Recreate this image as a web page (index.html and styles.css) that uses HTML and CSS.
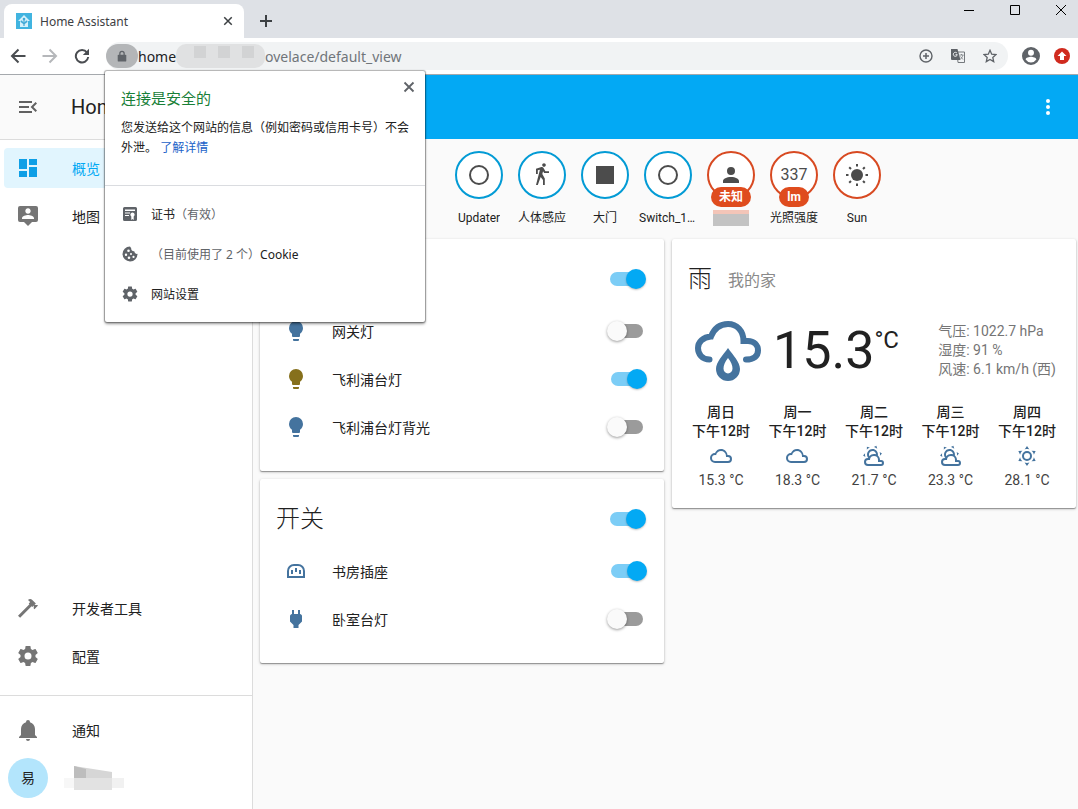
FILE: index.html
```html
<!DOCTYPE html>
<html lang="zh-CN">

<head>
  <meta charset="UTF-8">
  <meta name="viewport" content="width=device-width, initial-scale=1.0">
  <title>Home Assistant</title>
  <link rel="stylesheet" href="styles.css">
</head>

<body>
  <!-- shared icons -->
  <svg class="sprite" aria-hidden="true">
    <symbol id="i-close" viewBox="0 0 12 12"><path d="M1.500 1.500l9 9M10.500 1.500l-9 9" fill="none" stroke="currentColor" stroke-width="1.800"/></symbol>
    <symbol id="i-cog" viewBox="0 0 24 24"><path d="M12,15.5A3.5,3.5 0 0,1 8.5,12A3.5,3.5 0 0,1 12,8.500A3.5,3.5 0 0,1 15.5,12A3.5,3.5 0 0,1 12,15.5M19.43,12.97C19.47,12.65 19.5,12.33 19.5,12C19.5,11.67 19.47,11.34 19.43,11L21.54,9.37C21.73,9.22 21.78,8.95 21.66,8.73L19.66,5.27C19.54,5.05 19.27,4.96 19.05,5.05L16.56,6.05C16.04,5.66 15.5,5.32 14.87,5.07L14.5,2.42C14.46,2.18 14.25,2 14,2H10C9.75,2 9.54,2.18 9.5,2.42L9.13,5.07C8.5,5.32 7.96,5.66 7.44,6.05L4.95,5.05C4.73,4.96 4.46,5.05 4.34,5.27L2.34,8.73C2.21,8.95 2.27,9.22 2.46,9.37L4.57,11C4.53,11.34 4.5,11.67 4.5,12C4.5,12.33 4.53,12.65 4.57,12.97L2.46,14.63C2.27,14.78 2.21,15.05 2.34,15.27L4.34,18.73C4.46,18.95 4.73,19.03 4.95,18.95L7.44,17.94C7.96,18.34 8.5,18.68 9.13,18.93L9.5,21.58C9.54,21.82 9.75,22 10,22H14C14.25,22 14.46,21.82 14.5,21.58L14.87,18.93C15.5,18.67 16.04,18.34 16.56,17.94L19.05,18.95C19.27,19.03 19.54,18.95 19.66,18.73L21.66,15.27C21.78,15.05 21.73,14.78 21.54,14.63L19.43,12.97Z"/></symbol>
    <symbol id="i-bulb" viewBox="0 0 24 24"><path d="M12,2A7,7 0 0,0 5,9C5,11.38 6.19,13.47 8,14.74V17A1,1 0 0,0 9,18H15A1,1 0 0,0 16,17V14.74C17.81,13.47 19,11.38 19,9A7,7 0 0,0 12,2M9,21A1,1 0 0,0 10,22H14A1,1 0 0,0 15,21V20H9V21Z"/></symbol>
    <symbol id="i-ring" viewBox="0 0 24 24"><circle cx="12" cy="12" r="9" fill="none" stroke="currentColor" stroke-width="2"/></symbol>
    <symbol id="i-cloudy" viewBox="0 0 24 24"><path d="M6,19A5,5 0 0,1 1,14A5,5 0 0,1 6,9C7,6.65 9.3,5 12,5C15.43,5 18.24,7.66 18.5,11.03L19,11A4,4 0 0,1 23,15A4,4 0 0,1 19,19H6M19,13H17V12A5,5 0 0,0 12,7C9.5,7 7.45,8.82 7.06,11.19C6.73,11.07 6.37,11 6,11A3,3 0 0,0 3,14A3,3 0 0,0 6,17H19A2,2 0 0,0 21,15A2,2 0 0,0 19,13Z"/></symbol>
    <symbol id="i-partly" viewBox="0 0 24 24"><path d="M12.74,5.47C15.1,6.5 16.35,9.03 15.92,11.46C17.19,12.56 18,14.19 18,16V16.17C18.31,16.06 18.65,16 19,16A3,3 0 0,1 22,19A3,3 0 0,1 19,22H6A4,4 0 0,1 2,18A4,4 0 0,1 6,14H6.27C5,12.45 4.6,10.24 5.5,8.26C6.72,5.5 9.97,4.24 12.74,5.47M11.93,7.3C10.16,6.5 8.09,7.31 7.31,9.07C6.85,10.09 6.93,11.22 7.41,12.13C8.5,10.83 10.16,10 12,10C12.7,10 13.38,10.12 14,10.34C13.94,9.06 13.18,7.86 11.93,7.3M13.55,3.64C13,3.4 12.45,3.23 11.88,3.12L14.37,1.82L15.27,4.71C14.76,4.29 14.19,3.93 13.55,3.64M6.09,4.44C5.6,4.79 5.17,5.19 4.8,5.63L4.91,2.82L7.87,3.5C7.25,3.71 6.65,4.03 6.09,4.44M18,9.71C17.91,9.12 17.78,8.55 17.59,8L19.97,9.5L17.92,11.73C18.03,11.08 18.05,10.4 18,9.71M3.04,11.3C3.11,11.9 3.24,12.47 3.43,13L1.06,11.5L3.1,9.28C3,9.93 2.97,10.61 3.04,11.3M19,18H16V16A4,4 0 0,0 12,12A4,4 0 0,0 8,16H6A2,2 0 0,0 4,18A2,2 0 0,0 6,20H19A1,1 0 0,0 20,19A1,1 0 0,0 19,18Z"/></symbol>
    <symbol id="i-sunny" viewBox="0 0 24 24"><path d="M12,7A5,5 0 0,1 17,12A5,5 0 0,1 12,17A5,5 0 0,1 7,12A5,5 0 0,1 12,7M12,9A3,3 0 0,0 9,12A3,3 0 0,0 12,15A3,3 0 0,0 15,12A3,3 0 0,0 12,9M12,2L14.39,5.42C13.65,5.15 12.84,5 12,5C11.16,5 10.35,5.15 9.61,5.42L12,2M3.34,7L7.5,6.65C6.9,7.16 6.36,7.78 5.94,8.5C5.5,9.24 5.25,10 5.11,10.79L3.34,7M3.36,17L5.12,13.23C5.26,14 5.53,14.78 5.95,15.5C6.37,16.24 6.91,16.86 7.5,17.37L3.36,17M20.65,7L18.88,10.79C18.74,10 18.47,9.23 18.05,8.5C17.63,7.78 17.1,7.15 16.5,6.64L20.65,7M20.64,17L16.5,17.36C17.09,16.85 17.62,16.22 18.04,15.5C18.46,14.77 18.73,14 18.87,13.21L20.64,17M12,22L9.59,18.56C10.33,18.83 11.14,19 12,19C12.82,19 13.63,18.83 14.37,18.56L12,22Z"/></symbol>
  </svg>

  <header class="browser">
    <div class="tabs">
      <div class="tab">
        <svg class="favicon" viewBox="0 0 16 16"><rect width="16" height="16" fill="#41b4e0"/><path d="M8 2L2 8h2v6h8V8h2z" fill="#d5f1fb"/><path d="M8 13V6M8 11L5.500 8.500M8 11l2.500-2.500" fill="none" stroke="#41a9d6" stroke-width="1.200"/><circle cx="8" cy="6" r="1.300" fill="#41a9d6"/><circle cx="5.500" cy="8.500" r="1" fill="#41a9d6"/><circle cx="10.500" cy="8.500" r="1" fill="#41a9d6"/></svg>
        <span class="tab-title">Home Assistant</span>
        <button class="plain" aria-label="关闭标签页"><svg class="s10"><use href="#i-close"/></svg></button>
      </div>
      <button class="plain new-tab" aria-label="新标签页"><svg class="s12" viewBox="0 0 12 12"><path d="M6 0v12M0 6h12" stroke="#3c4043" stroke-width="2"/></svg></button>
      <div class="window-buttons">
        <button class="plain" aria-label="最小化"><svg class="s12" viewBox="0 0 12 12"><path d="M1 6.500h10" stroke="#000"/></svg></button>
        <button class="plain" aria-label="最大化"><svg class="s12" viewBox="0 0 12 12"><path d="M1.500 1.500h9v9h-9z" fill="none" stroke="#000"/></svg></button>
        <button class="plain" aria-label="关闭"><svg class="s12" viewBox="0 0 12 12"><path d="M1 1l10 10M11 1L1 11" stroke="#000"/></svg></button>
      </div>
    </div>

    <div class="toolbar">
      <div class="nav">
        <button class="plain" aria-label="后退"><svg class="s16" viewBox="0 0 16 16"><path d="M15.500 8H2M8.500 1.500L2 8l6.500 6.500" fill="none" stroke="#4a4d51" stroke-width="2"/></svg></button>
        <button class="plain" aria-label="前进"><svg class="s16" viewBox="0 0 16 16"><path d="M.5 8H14M7.500 1.500L14 8l-6.500 6.500" fill="none" stroke="#b5b7ba" stroke-width="2"/></svg></button>
        <button class="plain" aria-label="重新加载"><svg class="s16" viewBox="0 0 16 16"><path d="M13 4.500A6.200 6.200 0 1 0 14.200 9" fill="none" stroke="#4a4d51" stroke-width="2"/><path d="M15 .8V7H8.800z" fill="#4a4d51"/></svg></button>
      </div>
      <div class="omnibox">
        <button class="plain lock" aria-label="查看网站信息"><svg class="s12" viewBox="0 0 12 14"><path d="M3.500 6V4a2.500 2.500 0 0 1 5 0v2" fill="none" stroke="#5f6368" stroke-width="1.500"/><rect x="1" y="5.500" width="10" height="8" rx="1" fill="#5f6368"/></svg></button>
        <input class="url host" type="text" value="home" aria-label="主机">
        <span class="mosaic url-mosaic"><i></i><i></i><i></i></span>
        <input class="url path" type="text" value="ovelace/default_view" aria-label="路径">
        <button class="plain" aria-label="缩放"><svg class="s14" viewBox="0 0 14 14"><circle cx="7" cy="7" r="6" fill="none" stroke="#5f6368" stroke-width="1.400"/><path d="M7 4v6M4 7h6" stroke="#5f6368" stroke-width="1.500"/></svg></button>
        <button class="plain" aria-label="翻译"><svg class="s14" viewBox="0 0 14 14"><path d="M6 3h7.500v10.500H7z" fill="none" stroke="#75797d"/><path d="M0 0h6.500l3 11H1a1 1 0 0 1-1-1z" fill="#5f6368"/><path d="M6 4.200A2 2 0 1 0 6.300 5.700H4.500" fill="none" stroke="#f1f3f4"/><path d="M8.500 6h4M10.500 5v1M12 6c-.5 2-1.500 3-2.500 4M9.500 7.500l2.500 3" fill="none" stroke="#75797d" stroke-width=".8"/></svg></button>
        <button class="plain" aria-label="收藏"><svg class="s14" viewBox="0 0 14 14"><path d="M7 1.300l1.700 3.900 4.300.4-3.200 2.800.9 4.200L7 10.400l-3.700 2.200.9-4.200L1 5.600l4.300-.4z" fill="none" stroke="#5f6368" stroke-width="1.300"/></svg></button>
      </div>
      <button class="plain" aria-label="用户"><svg class="s18" viewBox="0 0 20 20"><path fill="#5f6368" d="M10 0a10 10 0 1 0 0 20 10 10 0 0 0 0-20m0 3a3.300 3.300 0 1 1 0 6.600A3.300 3.300 0 0 1 10 3m0 14.200a7.200 7.200 0 0 1-6-3.200c0-2 4-3.100 6-3.100s6 1.100 6 3.100a7.200 7.200 0 0 1-6 3.200"/></svg></button>
      <button class="plain" aria-label="更新"><svg class="s16" viewBox="0 0 16 16"><circle cx="8" cy="8" r="8" fill="#d02a1e"/><path d="M8 3.500L3.500 8H6v4h4V8h2.500z" fill="#fff"/></svg></button>
    </div>

    <section class="site-info">
      <button class="plain site-close" aria-label="关闭"><svg class="s12"><use href="#i-close"/></svg></button>
      <div class="site-summary">
        <h2>连接是安全的</h2>
        <p>您发送给这个网站的信息（例如密码或信用卡号）不会外泄。 <a href="#">了解详情</a></p>
      </div>
      <div class="site-row">
        <svg class="s16" viewBox="0 0 16 16"><path fill-rule="evenodd" d="M2.500 1h11A1.500 1.500 0 0 1 15 2.500v11a1.500 1.500 0 0 1-1.500 1.500h-11A1.500 1.500 0 0 1 1 13.500v-11A1.500 1.500 0 0 1 2.500 1M3 3.500V5h10V3.500zM3 6.500v1h5v-1zM3 9v1h4V9zM10.500 6.500a2.200 2.200 0 0 0-1.200 4V14l1.200-1 1.200 1v-3.500a2.200 2.200 0 0 0-1.200-4"/></svg>
        <span>证书<em>（有效）</em></span>
      </div>
      <div class="site-row">
        <svg class="s16" viewBox="0 0 16 16"><path fill-rule="evenodd" d="M8 .5a7.500 7.500 0 1 0 7.500 7.300 2.600 2.600 0 0 1-3.200-2.600A2.700 2.700 0 0 1 9.200 2 2.500 2.500 0 0 1 8 .5M6.500 3.500a1.300 1.300 0 1 1 0 2.600 1.300 1.300 0 0 1 0-2.600M4 7.500a1.200 1.200 0 1 1 0 2.400 1.200 1.200 0 0 1 0-2.400M9 7a1 1 0 1 1 0 2 1 1 0 0 1 0-2M7 10.500a1.300 1.300 0 1 1 0 2.600 1.300 1.300 0 0 1 0-2.600M11.500 9.800a1.100 1.100 0 1 1 0 2.200 1.100 1.100 0 0 1 0-2.200"/></svg>
        <span><em>（目前使用了 2 个）</em>Cookie</span>
      </div>
      <div class="site-row">
        <svg class="s18"><use href="#i-cog"/></svg>
        <span>网站设置</span>
      </div>
    </section>
  </header>

  <div class="app">
    <aside class="sidebar">
      <div class="sidebar-head">
        <button class="plain" aria-label="收起菜单"><svg class="s24" viewBox="0 0 24 24"><path d="M21,15.61L19.59,17L14.58,12L19.59,7L21,8.39L17.44,12L21,15.61M3,6H16V8H3V6M3,13V11H13V13H3M3,18V16H16V18H3Z"/></svg></button>
        <span>Home Assistant</span>
      </div>
      <nav class="menu">
        <a class="item active" href="#"><svg class="s24" viewBox="0 0 24 24"><path d="M13,3V9H21V3M13,21H21V11H13M3,21H11V15H3M3,13H11V3H3V13Z"/></svg>概览</a>
        <a class="item" href="#"><svg class="s24" viewBox="0 0 24 24"><path d="M20,2H4A2,2 0 0,0 2,4V16A2,2 0 0,0 4,18H8L12,22L16,18H20A2,2 0 0,0 22,16V4A2,2 0 0,0 20,2M12,4.3C13.5,4.3 14.7,5.5 14.7,7C14.7,8.5 13.5,9.7 12,9.7C10.5,9.7 9.3,8.5 9.3,7C9.3,5.5 10.5,4.3 12,4.3M18,15H6V14.1C6,12.1 10,11 12,11C14,11 18,12.1 18,14.1V15Z"/></svg>地图</a>
        <a class="item tools" href="#"><svg class="s24" viewBox="0 0 24 24"><path d="M2,19.63L13.43,8.2L12.72,7.5L14.14,6.07L12,3.89C13.2,2.7 15.09,2.7 16.27,3.89L19.87,7.5L18.45,8.91H21.29L22,9.62L18.45,13.21L17.74,12.5V9.62L16.27,11.04L15.56,10.33L4.13,21.76L2,19.63Z"/></svg>开发者工具</a>
        <a class="item" href="#"><svg class="s24"><use href="#i-cog"/></svg>配置</a>
      </nav>
      <div class="menu user-menu">
        <a class="item" href="#"><svg class="s24" viewBox="0 0 24 24"><path d="M21,19V20H3V19L5,17V11C5,7.9 7.03,5.17 10,4.29C10,4.19 10,4.1 10,4A2,2 0 0,1 12,2A2,2 0 0,1 14,4C14,4.1 14,4.19 14,4.29C16.97,5.17 19,7.9 19,11V17L21,19M14,21A2,2 0 0,1 12,23A2,2 0 0,1 10,21"/></svg>通知</a>
        <a class="item profile" href="#" aria-label="用户"><span class="avatar">易</span>
          <svg class="name-mosaic" viewBox="0 0 60 28"><path d="M0 14h12v10H0z" fill="#f7f7f7"/><path d="M10 2l38 6v6H10z" fill="#d6d6d6"/><path d="M10 2l12 3v9H10z" fill="#bdbdbd"/><path d="M10 14h38v12H10z" fill="#e2e2e2"/><path d="M48 14h12v10H48z" fill="#f1f1f1"/></svg>
        </a>
      </div>
    </aside>

    <main class="main">
      <div class="app-bar">
        <button class="plain" aria-label="更多"><svg class="s24" viewBox="0 0 24 24"><path d="M12,16A2,2 0 1,1 12,20A2,2 0 1,1 12,16M12,10A2,2 0 1,1 12,14A2,2 0 1,1 12,10M12,4A2,2 0 1,1 12,8A2,2 0 1,1 12,4Z"/></svg></button>
      </div>

      <div class="view">
        <div class="badges">
          <div class="badge"><div class="circle"><svg class="s24"><use href="#i-ring"/></svg></div><span>Updater</span></div>
          <div class="badge"><div class="circle"><svg class="s24" viewBox="0 0 24 24"><path d="M14.12,10H19V8.2H15.38L13.38,4.87C13.08,4.37 12.54,4.03 11.92,4.03C11.74,4.03 11.58,4.06 11.42,4.11L6,5.8V11H7.8V7.33L9.91,6.67L6,22H7.8L10.67,13.89L13,17V22H14.8V15.59L12.31,11.05L13.04,8.18M14,3.8C15,3.8 15.8,3 15.8,2C15.8,1 15,0.2 14,0.2C13,0.2 12.2,1 12.2,2C12.2,3 13,3.8 14,3.8Z"/></svg></div><span>人体感应</span></div>
          <div class="badge"><div class="circle"><svg class="s24" viewBox="0 0 24 24"><path d="M3 3h18v18H3z"/></svg></div><span>大门</span></div>
          <div class="badge"><div class="circle"><svg class="s24"><use href="#i-ring"/></svg></div><span>Switch_158d</span></div>
          <div class="badge red"><div class="circle"><svg class="s24" viewBox="0 0 24 24"><path d="M12,4A4,4 0 0,1 16,8A4,4 0 0,1 12,12A4,4 0 0,1 8,8A4,4 0 0,1 12,4M12,14C16.42,14 20,15.79 20,18V20H4V18C4,15.79 7.58,14 12,14Z"/></svg><b>未知</b></div><i class="mosaic badge-mosaic"></i></div>
          <div class="badge red"><div class="circle">337<b>lm</b></div><span>光照强度</span></div>
          <div class="badge red"><div class="circle"><svg class="s24" viewBox="0 0 24 24"><circle cx="12" cy="12" r="6"/><path d="M12 1v2.500M12 20.500V23M1 12h2.500M20.500 12H23M4.200 4.200L6 6M18 18l1.800 1.800M4.200 19.800L6 18M18 6l1.800-1.800" stroke="currentColor" stroke-width="2"/></svg></div><span>Sun</span></div>
        </div>

        <div class="columns">
          <div class="column">
            <section class="card">
              <div class="card-head">
                <h2>灯</h2>
                <input class="toggle" type="checkbox" aria-label="灯" checked>
              </div>
              <div class="entity">
                <svg class="s24"><use href="#i-bulb"/></svg>
                <label for="gateway">网关灯</label>
                <input class="toggle" type="checkbox" id="gateway">
              </div>
              <div class="entity lit">
                <svg class="s24"><use href="#i-bulb"/></svg>
                <label for="philips">飞利浦台灯</label>
                <input class="toggle" type="checkbox" id="philips" checked>
              </div>
              <div class="entity">
                <svg class="s24"><use href="#i-bulb"/></svg>
                <label for="backlight">飞利浦台灯背光</label>
                <input class="toggle" type="checkbox" id="backlight">
              </div>
            </section>

            <section class="card">
              <div class="card-head">
                <h2>开关</h2>
                <input class="toggle" type="checkbox" aria-label="开关" checked>
              </div>
              <div class="entity">
                <svg class="s24" viewBox="0 0 24 24"><path d="M4 18V12a6 6 0 0 1 6-6h4a6 6 0 0 1 6 6v6z" fill="none" stroke="currentColor" stroke-width="2"/><path d="M7 11h2v4H7zM11 9h2v4h-2zM15 11h2v4h-2z"/></svg>
                <label for="study">书房插座</label>
                <input class="toggle" type="checkbox" id="study" checked>
              </div>
              <div class="entity">
                <svg class="s24" viewBox="0 0 24 24"><path d="M16,7V3H14V7H10V3H8V7H8C7,7 6,8 6,9V14.5L9.5,18V21H14.5V18L18,14.5V9C18,8 17,7 16,7Z"/></svg>
                <label for="bedroom">卧室台灯</label>
                <input class="toggle" type="checkbox" id="bedroom">
              </div>
            </section>
          </div>

          <div class="column">
            <section class="card weather">
              <div class="weather-head">
                <h2>雨</h2>
                <span>我的家</span>
              </div>
              <div class="now">
                <svg class="rain" viewBox="0 0 66 60"><path d="M14.500 38.500C7 38.500 3 33 3 27C3 21 8 16 16 15.500C19 8 25 3 33 3C42 3 48.500 10 48.500 20H53C59 20 63 24 63 29.500C63 35 59 38.500 51 38.500" fill="none" stroke="#44739e" stroke-width="6" stroke-linecap="round"/><path fill="#44739e" fill-rule="evenodd" d="M33 27C28 34 21 41 21 48A12 12 0 0 0 45 48C45 41 38 34 33 27ZM33 37C30 41 28.500 44 28.500 47.500A4.500 5 0 0 0 37.500 47.500C37.500 44 36 41 33 37Z"/></svg>
                <div class="temp">15.3<span>°C</span></div>
                <div class="attrs">
                  <div>气压: 1022.7 hPa</div>
                  <div>湿度: 91 %</div>
                  <div>风速: 6.1 km/h (西)</div>
                </div>
              </div>
              <div class="forecast">
                <div class="day"><b>周日<br>下午12时</b><svg class="s24"><use href="#i-cloudy"/></svg>15.3 °C</div>
                <div class="day"><b>周一<br>下午12时</b><svg class="s24"><use href="#i-cloudy"/></svg>18.3 °C</div>
                <div class="day"><b>周二<br>下午12时</b><svg class="s24"><use href="#i-partly"/></svg>21.7 °C</div>
                <div class="day"><b>周三<br>下午12时</b><svg class="s24"><use href="#i-partly"/></svg>23.3 °C</div>
                <div class="day"><b>周四<br>下午12时</b><svg class="s24"><use href="#i-sunny"/></svg>28.1 °C</div>
              </div>
            </section>
          </div>
        </div>
      </div>
    </main>
  </div>
</body>

</html>
```
FILE: styles.css
```css
* {
  box-sizing: border-box;
}

body {
  margin: 0;
  min-height: 100vh;
  display: flex;
  flex-direction: column;
  font-family: Roboto, "Noto Sans CJK SC", sans-serif;
  font-size: 14px;
  color: #212121;
  background: #fafafa;
}

svg {
  display: block;
  flex: none;
  fill: currentColor;
}

h2,
p {
  margin: 0;
  font-weight: 400;
}

em,
i {
  font-style: normal;
}

.sprite {
  position: absolute;
  width: 0;
  height: 0;
}

.s10 { width: 10px; height: 10px; }
.s12 { width: 12px; height: 12px; }
.s14 { width: 14px; height: 14px; }
.s16 { width: 16px; height: 16px; }
.s18 { width: 18px; height: 18px; }
.s24 { width: 24px; height: 24px; }

.plain {
  display: flex;
  align-items: center;
  justify-content: center;
  padding: 0;
  border: 0;
  background: none;
  color: inherit;
  cursor: pointer;
}

/* browser window */
.browser {
  position: relative;
  z-index: 2;
  font-family: "Noto Sans", "Noto Sans CJK SC", sans-serif;
  font-size: 12px;
}

.tabs {
  display: flex;
  height: 38px;
  padding-left: 4px;
  background: #dee1e6;
}

.tab {
  display: flex;
  align-items: center;
  width: 240px;
  margin-top: 4px;
  padding: 0 11px 0 12px;
  border-radius: 8px 8px 0 0;
  background: #fff;
  color: #3c4043;
}

.favicon {
  width: 16px;
  height: 16px;
  margin-right: 8px;
}

.tab-title {
  flex: 1;
}

.new-tab {
  width: 28px;
  height: 28px;
  margin: 7px 0 0 8px;
}

.window-buttons {
  display: flex;
  align-items: flex-start;
  gap: 34px;
  margin-left: auto;
  padding: 4px 11px 0 0;
}

.toolbar {
  display: flex;
  align-items: center;
  gap: 14px;
  height: 37px;
  padding: 0 8px 0 10px;
  border-bottom: 1px solid #a5a9ad;
  background: #fff;
}

.nav {
  display: flex;
  gap: 16px;
  margin-right: 2px;
}

.omnibox {
  display: flex;
  align-items: center;
  flex: 1;
  gap: 18px;
  height: 28px;
  padding-right: 11px;
  border-radius: 14px;
  background: #f1f3f4;
  color: #5f6368;
}

.lock {
  width: 32px;
  height: 24px;
  margin-right: -18px;
  border-radius: 12px;
  background: #b4b6b8;
}

.url {
  height: 24px;
  padding: 0;
  border: 0;
  background: none;
  font: 14px "Noto Sans", sans-serif;
  color: #70757a;
}

.host {
  width: 38px;
  color: #202124;
}

.path {
  flex: 1;
  min-width: 0;
}

.mosaic {
  display: flex;
  background: #e0e1e2;
}

.url-mosaic {
  gap: 12px;
  width: 89px;
  height: 24px;
  margin: 0 -18px;
  padding: 2px 0 0 18px;
  border-radius: 10px;
}

.url-mosaic i {
  width: 12px;
  height: 12px;
  background: #d2d3d4;
}

/* site information popup under the lock */
.site-info {
  position: absolute;
  top: 71px;
  left: 105px;
  width: 320px;
  padding-bottom: 8px;
  border-radius: 2px;
  background: #fff;
  box-shadow: 0 0 1px 1px rgba(0, 0, 0, 0.3), 0 2px 3px rgba(0, 0, 0, 0.4);
}

.site-close {
  position: absolute;
  top: 10px;
  right: 10px;
  color: #5f6368;
}

.site-summary {
  height: 115px;
  margin-bottom: 8px;
  padding: 15px 12px 0 16px;
  border-bottom: 1px solid #dadce0;
  line-height: 20px;
}

.site-summary h2 {
  margin-bottom: 8px;
  font-size: 15px;
  line-height: 24px;
  color: #188038;
}

.site-summary a {
  color: #1a62c8;
  text-decoration: none;
}

.site-row {
  display: flex;
  align-items: center;
  height: 40px;
  padding-left: 16px;
}

.site-row svg {
  width: 18px;
  margin-right: 12px;
  color: #5f6368;
}

.site-row em {
  color: #5f6368;
}

/* sidebar */
.app {
  display: flex;
  flex: 1;
}

.sidebar {
  display: flex;
  flex-direction: column;
  width: 253px;
  border-right: 1px solid #dcdcdc;
  background: #fff;
}

.sidebar-head {
  display: flex;
  align-items: center;
  gap: 31px;
  height: 65px;
  padding-left: 16px;
  border-bottom: 1px solid #dcdcdc;
  background: #fafafa;
  font-size: 20px;
}

.sidebar-head .plain {
  color: #616161;
}

.menu {
  display: flex;
  flex-direction: column;
  gap: 8px;
  padding: 8px 4px;
}

nav.menu {
  flex: 1;
  padding-bottom: 19px;
}

.item {
  display: flex;
  align-items: center;
  gap: 32px;
  height: 40px;
  padding-left: 12px;
  border-radius: 4px;
  color: #212121;
  text-decoration: none;
}

.item svg {
  color: #757575;
}

.item.active {
  background: #e1f5fe;
  color: #03a9f4;
}

.item.active svg {
  color: #0e9fe6;
}

.tools {
  margin-top: auto;
}

.user-menu {
  padding: 14px 4px 11px;
  border-top: 1px solid #dcdcdc;
}

.profile {
  gap: 16px;
  padding-left: 4px;
}

.avatar {
  width: 40px;
  line-height: 40px;
  border-radius: 50%;
  background: #b3e5fc;
  text-align: center;
}

.name-mosaic {
  width: 60px;
  height: 28px;
}

/* dashboard */
.main {
  flex: 1;
  min-width: 0;
}

.app-bar {
  display: flex;
  align-items: center;
  justify-content: flex-end;
  height: 64px;
  padding-right: 18px;
  background: #03a9f4;
  color: #fff;
}

.view {
  padding: 12px 2px 8px 7px;
}

.badges {
  display: flex;
  justify-content: center;
  gap: 3px;
  height: 88px;
}

.badge {
  display: flex;
  flex-direction: column;
  align-items: center;
  width: 60px;
  font-size: 12px;
  line-height: 20px;
}

.badge > span {
  max-width: 58px;
  margin-top: 9px;
  overflow: hidden;
  text-overflow: ellipsis;
  white-space: nowrap;
}

.circle {
  position: relative;
  display: flex;
  align-items: center;
  justify-content: center;
  width: 48px;
  height: 48px;
  border: 2px solid #039bd5;
  border-radius: 50%;
  background: #fff;
  font-size: 16px;
  color: #4c4c4c;
}

.red .circle {
  border-color: #d84a22;
}

.circle b {
  position: absolute;
  bottom: -10px;
  padding: 0 8px;
  border-radius: 10px;
  background: #df4c1e;
  font-size: 12px;
  font-weight: 700;
  line-height: 20px;
  white-space: nowrap;
  color: #fff;
}

.badge-mosaic {
  width: 36px;
  height: 16px;
  margin-top: 11px;
  border-top: 4px solid #f3c5b8;
  background: #c3c3c3;
}

.columns {
  display: flex;
  align-items: flex-start;
  gap: 8px;
}

.column {
  display: flex;
  flex-direction: column;
  flex: 1;
  gap: 8px;
  min-width: 0;
}

.card {
  padding: 0 17px 24px 16px;
  border-radius: 2px;
  background: #fff;
  box-shadow: 0 1px 3px rgba(0, 0, 0, 0.25), 0 1px 1px rgba(0, 0, 0, 0.3);
}

.card h2 {
  font-size: 24px;
  font-weight: 300;
  line-height: 32px;
}

.card-head {
  display: flex;
  align-items: center;
  justify-content: space-between;
  height: 72px;
  padding: 8px 1px 0 0;
}

.entity {
  display: flex;
  align-items: center;
  height: 40px;
  padding-left: 8px;
  color: #44739e;
}

.entity + .entity {
  margin-top: 8px;
}

.entity.lit {
  color: #86701c;
}

.entity label {
  flex: 1;
  margin-left: 24px;
  color: #212121;
}

.toggle {
  position: relative;
  width: 40px;
  height: 20px;
  margin: 0;
  appearance: none;
  cursor: pointer;
}

.toggle::before {
  content: "";
  position: absolute;
  top: 3px;
  left: 4px;
  width: 32px;
  height: 14px;
  border-radius: 7px;
  background: #9b9b9b;
}

.toggle::after {
  content: "";
  position: absolute;
  top: 0;
  left: 0;
  width: 20px;
  height: 20px;
  border-radius: 50%;
  background: #fafafa;
  box-shadow: 0 1px 3px rgba(0, 0, 0, 0.4);
}

.toggle:checked::before {
  background: #7ccdf6;
}

.toggle:checked::after {
  left: 20px;
  background: #03a9f4;
  box-shadow: 0 1px 2px rgba(0, 0, 0, 0.25);
}

/* weather card */
.weather {
  padding: 24px 20px 18px;
}

.weather-head {
  display: flex;
  align-items: flex-end;
  gap: 16px;
  margin: 0 -4px 25px;
}

.weather-head span {
  font-size: 16px;
  line-height: 28px;
  color: #8a8a8a;
}

.now {
  display: flex;
  align-items: center;
  height: 61px;
  padding-left: 3px;
}

.rain {
  width: 66px;
  height: 60px;
}

.temp {
  display: flex;
  margin-left: 12px;
  font-size: 52px;
  line-height: 61px;
}

.temp span {
  font-size: 24px;
  line-height: 40px;
}

.attrs {
  margin-left: auto;
  line-height: 19px;
  color: #757575;
}

.forecast {
  display: flex;
  justify-content: space-between;
  margin-top: 22px;
  line-height: 19px;
  text-align: center;
}

.day {
  color: #424242;
}

.day b {
  font-weight: 500;
  color: #212121;
}

.day svg {
  margin: 3px auto;
  color: #44739e;
}
```
